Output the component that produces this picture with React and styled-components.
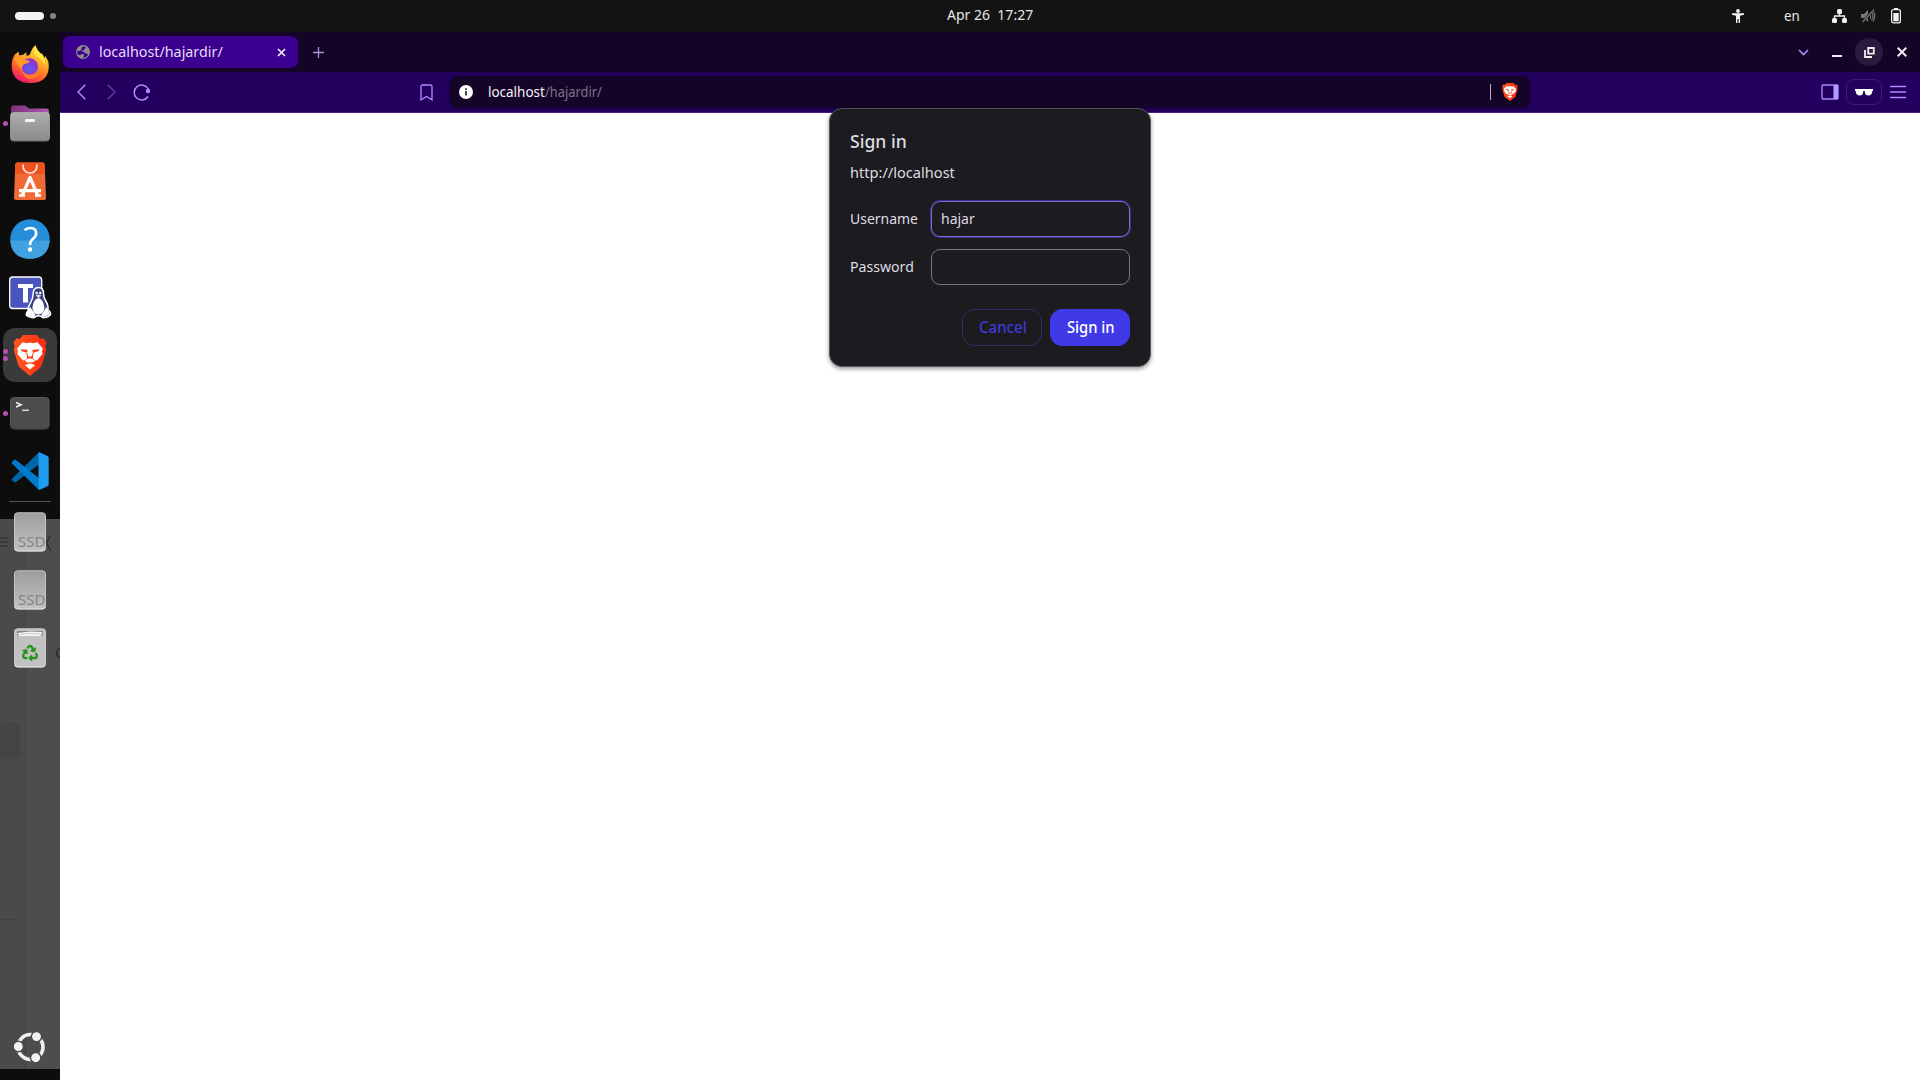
import React, { useLayoutEffect, useRef, useState } from "react";
import styled, { createGlobalStyle } from "styled-components";
import { FaRecycle } from "react-icons/fa";

const Global = createGlobalStyle`
  * { box-sizing: border-box; }
  body { margin: 0; background: #fff; overflow: hidden; font-family: "Noto Sans", "Open Sans", sans-serif; }
  button, input { font: inherit; margin: 0; padding: 0; }
  svg { display: block; flex: none; }
`;

const Desktop = styled.div`
  width: 1920px; height: 1080px; display: flex; flex-direction: column; background: #fff;
`;

/* text scaled to a fixed advance width */
const FitBox = styled.span`
  display: block; flex: none; width: ${p => p.$w}px; white-space: pre;
  font-size: ${p => p.$size || 15}px; font-weight: ${p => p.$weight || 400};
  color: ${p => p.$color || "#dedde2"}; line-height: 20px;
`;
const FitInner = styled.span`display: inline-block; transform-origin: 0 50%;`;
function Fit({ w, size, weight, color, children }) {
  const ref = useRef(null);
  const [scale, setScale] = useState(1);
  useLayoutEffect(() => { setScale(w / ref.current.offsetWidth); }, [w]);
  return (
    <FitBox $w={w} $size={size} $weight={weight} $color={color}>
      <FitInner ref={ref} style={{ transform: `scaleX(${scale})` }}>{children}</FitInner>
    </FitBox>
  );
}

/* ---------- top panel ---------- */
const Panel = styled.header`
  height: 32px; flex: none; background: #131313; display: grid;
  grid-template-columns: 946px 88px 1fr; align-items: center;
`;
const Workspaces = styled.div`display: flex; align-items: center; gap: 6px; padding-left: 15px;`;
const Pill = styled.i`width: 29px; height: 8px; border-radius: 4px; background: #f2f2f2;`;
const Dot = styled.i`width: 6px; height: 6px; border-radius: 50%; background: #868686;`;
const Clock = styled.div`padding: 0 0 4px 1px;`;
const Tray = styled.div`
  display: flex; align-items: center; justify-content: flex-end; padding-right: 18px;
`;
const TrayItem = styled.div`margin-left: ${p => p.$gap}px; padding-bottom: ${p => p.$lift || 0}px;`;

/* ---------- dock ---------- */
const Body = styled.div`flex: 1; display: flex; min-height: 0;`;
const Dock = styled.nav`
  position: relative; z-index: 0; width: 60px; flex: none; background: #0d0d0d; overflow: hidden;
  display: flex; flex-direction: column; padding: 4px 0 4px;
`;
const Ghost = styled.div`
  position: absolute; z-index: -1; left: 0; top: 487px; width: 60px; height: 550px;
  background: #4d4d4d; display: flex;
`;
const GhostSide = styled.div`
  width: 26px; background: #4a4a4a; border-right: 1px solid #424242; padding-top: 18px;
`;
const GhostRow = styled.div`margin-top: 176px; width: 20px; height: 36px; background: #444; border-radius: 0 5px 5px 0;`;
const GhostLine = styled.div`margin-top: 160px; width: 20px; height: 1px; background: #404040;`;
const GhostMain = styled.div`width: 34px; padding-top: 15px;`;
const GhostText = styled.div`margin: 90px 0 0 29px; font-size: 15px; line-height: 20px; color: #292929;`;
const Slot = styled.div`
  position: relative; height: 58px; flex: none; display: flex; align-items: center; justify-content: center;
`;
const ActiveTile = styled.div`
  width: 54px; height: 54px; border-radius: 12px; background: #3a3a3a;
  display: flex; align-items: center; justify-content: center;
`;
const Running = styled.div`
  position: absolute; left: 3px; top: 0; height: 58px; display: flex; flex-direction: column;
  justify-content: center; gap: 2.5px;
`;
const RunDot = styled.i`width: 5px; height: 5px; border-radius: 50%; background: #b54fb5;`;
const DockRule = styled.div`height: 3px; flex: none; padding: 1px 9px;`;
const DockRuleLine = styled.div`height: 1px; background: #555;`;
const DockSpacer = styled.div`flex: 1;`;
const Launcher = styled.button`
  height: 58px; border: 0; background: none; display: flex; align-items: center; justify-content: center;
`;

/* ---------- browser ---------- */
const Browser = styled.main`flex: 1; display: flex; flex-direction: column; background: #fff;`;
const TabStrip = styled.div`
  height: 40px; flex: none; background: #140428; display: flex; align-items: center; padding: 0 11px 0 3px;
`;
const Tab = styled.div`
  width: 235px; height: 32px; border-radius: 7px; background: #3b008f;
  display: flex; align-items: center; padding: 0 12px 0 13px;
`;
const TabText = styled.div`flex: 1; padding: 0 0 2px 9px;`;
const PlainButton = styled.button`
  border: 0; background: ${p => p.$bg || "none"}; border-radius: ${p => p.$round ? "50%" : 0};
  width: ${p => p.$w}px; height: 28px; display: flex; align-items: center; justify-content: center;
  margin-left: ${p => p.$gap || 0}px; flex: none;
`;
const Grow = styled.div`flex: 1;`;
const Toolbar = styled.div`
  height: 41px; flex: none; background: #23005e; border-bottom: 1px solid #482480;
  display: flex; align-items: center; padding: 0 13px 0 9px;
`;
const Address = styled.div`
  width: 1080px; height: 32px; margin-left: 10px; border-radius: 8px; background: #140428;
  box-shadow: 0 1px 4px rgba(0,0,0,.25);
  display: flex; align-items: center; padding: 0 12px 0 9px;
`;
const UrlParts = styled.div`display: flex; flex: 1; padding: 0 0 3px 15px;`;
const Bar = styled.i`width: 1px; height: 16px; background: #b5b2bc; margin-right: 11px;`;
const PrivatePill = styled.button`
  width: 36px; height: 26px; border: 1px solid #3f1d78; border-radius: 8px; background: none;
  display: flex; align-items: center; justify-content: center; margin: 0 7px 0 7px;
`;

/* ---------- sign-in dialog ---------- */
const Dialog = styled.form`
  position: absolute; left: 829px; top: 108px; width: 322px; height: 259px;
  border: 1px solid #55545a; border-radius: 13px; background: #1c1b1f;
  box-shadow: 0 2px 4px rgba(0,0,0,.4); padding: 22px 20px 20px;
  display: flex; flex-direction: column;
`;
const Origin = styled.div`margin-top: 11px;`;
const Fields = styled.div`
  display: grid; grid-template-columns: 68px 199px; column-gap: 13px; row-gap: 12px;
  align-items: center; margin-top: 19px;
`;
const Caption = styled.label`padding-bottom: 2px;`;
const Field = styled.div`
  height: 36px; border-radius: 9px; padding: 6px 9px; display: flex;
  border: 1px solid ${p => p.$focus ? "#7a6fd0" : "#78767c"};
  box-shadow: ${p => p.$focus ? "0 0 0 1px #36308f" : "none"};
`;
const Actions = styled.div`display: flex; justify-content: flex-end; gap: 8px; margin-top: 24px;`;
const Action = styled.button`
  width: 80px; height: 37px; border-radius: 12px; display: flex; align-items: center; justify-content: center;
  background: ${p => p.$primary ? "#3f39e8" : "transparent"}; padding: 0 0 2px 1px;
  border: 1px solid ${p => p.$primary ? "#3f39e8" : "#2d2f66"};
`;

/* ---------- icons ---------- */
function Lion({ w, h }) {
  return (
    <svg width={w} height={h} viewBox="0 0 34 41" preserveAspectRatio="none">
      <defs>
        <linearGradient id="brave" x1="0" x2="1"><stop offset="0" stopColor="#ff5a1f" /><stop offset="1" stopColor="#fb2a10" /></linearGradient>
      </defs>
      <path d="M10 0h14l3.300 4 3.200-.8 3 4.300-1.200 3.500 1 3.500-4.500 15.500q-.8 2.200-2.700 3.600L17 41l-9.100-7.400Q6 32.200 5.200 30L.7 14.500l1-3.500L.5 7.500l3-4.300 3.200.8z" fill="url(#brave)" />
      <path d="M9.500 7.300l4.500.9 3-.7 3 .7 4.500-.9L30 13.800l-1 2.200.5 3-5.500 6.500-1.500-.3-2.700-1.700L20.500 18l-.5-3h-6l-.5 3 .7 5.500-2.700 1.700-1.500.3L4.500 19l.5-3-1-2.200z" fill="#fff" />
      <path d="M14.200 9h5.600l.2 8-1 3.800L17 22l-2-1.200-1-3.800z" fill="#fff" />
      <path d="M17 23.300l3.200 1 2 1.500L17 29l-5.200-3.200 2-1.500zM17 27.500l5 2.700-5 4.300-5-4.300z" fill="#fff" />
      <path d="M7.500 14.200l6.300.6 1.200 1-1.500 2-5-1.700zM26.500 14.200l-6.300.6-1.200 1 1.500 2 5-1.700z" fill="#fb4319" />
      <path d="M12.300 28.300l4.700-1.100 4.700 1.100-.4 1L17 28.500l-4.300.8z" fill="#fb4319" />
    </svg>
  );
}

const FirefoxIcon = () => (
  <svg width="60" height="58" viewBox="0 0 60 58">
    <defs>
      <linearGradient id="ff" x1=".8" y1="0" x2=".3" y2="1">
        <stop offset="0" stopColor="#fff04a" /><stop offset=".35" stopColor="#ffb52b" />
        <stop offset=".68" stopColor="#ff6a2c" /><stop offset="1" stopColor="#f0126c" />
      </linearGradient>
      <radialGradient id="ffg" cx=".45" cy=".65" r=".65">
        <stop offset="0" stopColor="#5a62ee" /><stop offset=".6" stopColor="#7b40d8" /><stop offset="1" stopColor="#a22ad0" />
      </radialGradient>
    </defs>
    <path d="M14.700 18.500q1.600-1.200 4-3.100-.1 3 .8 4.100 2-.9 4-.8 1-1.600 3-2.200-.5 2 .3 3.300 3.500-.6 3.800-3.600 1.800-4.700 5-7.200.7 4.400 5 8.200 1.300-.2 1.900 1.100 1.200 1.400 1.800 3.600.8-1 .6-2.200 3.900 4.500 3.900 10.100 0 17.200-18.600 17.200-18.600 0-18.600-18.600 0-5 3.100-9.900z" fill="url(#ff)" />
    <circle cx="29.800" cy="30.500" r="8.300" fill="url(#ffg)" />
    <path d="M14.500 22.500q5-4 10.500 1.500l4.500.7q-.5 2.500-4.600 3-4 2.300-2.900 6.300-5-5.600-7.500-11.500z" fill="#ff9a27" />
    <path d="M35.600 9.500q.7 4.400 5 8.200 5.300 5 4.200 12-2.600-7-8.300-9.500-4.500-3.400-.9-10.700z" fill="#ffe644" />
    <path d="M22 33q2 6 8.500 5.800 7-.3 8.300-7.300 2 10.500-9 11.500-6 0-7.800-10z" fill="#ff7a2a" />
  </svg>
);
const FilesIcon = () => (
  <svg width="60" height="58" viewBox="0 0 60 58">
    <defs><linearGradient id="fg" y2="1" x2="0"><stop stopColor="#adadad" /><stop offset="1" stopColor="#8b8b8b" /></linearGradient>
      <linearGradient id="fp"><stop stopColor="#7c3279" /><stop offset="1" stopColor="#b157b0" /></linearGradient></defs>
    <path d="M11 32V14q0-2.500 2.500-2.500H25l4 3h17q3 0 3 3V32z" fill="url(#fp)" />
    <rect x="10.500" y="18.500" width="39" height="28" rx="3" fill="url(#fg)" stroke="#c0c0c0" strokeWidth=".6" />
    <path d="M10.500 44q0 3 3 3h33q3 0 3-3" fill="none" stroke="#6f6f6f" />
    <rect x="25" y="25" width="10" height="3" rx="1" fill="#f5f5f5" />
  </svg>
);
const StoreIcon = () => (
  <svg width="60" height="58" viewBox="0 0 60 58">
    <path d="M17.500 10.500h25q2 0 2.200 2L46 46q0 2-2 2H16q-2 0-2-2l1.300-33.500q.2-2 2.200-2z" fill="#f06a35" />
    <path d="M17.500 10.500h25q2 0 2.200 2L45 22H15l.3-9.500q.2-2 2.200-2z" fill="#ed541d" />
    <path d="M23 12.500q0 8.500 7 8.500t7-8.500" fill="none" stroke="#ffe9df" strokeWidth="1.600" />
    <path d="M22 44l8-18.500L38 44M19 38.700h22" fill="none" stroke="#fff" strokeWidth="3.200" strokeLinejoin="round" />
    <path d="M19 43.500h6M35 43.500h6" stroke="#fff" strokeWidth="2.500" />
  </svg>
);
const HelpIcon = () => (
  <svg width="60" height="58" viewBox="0 0 60 58">
    <circle cx="30" cy="29" r="19.700" fill="#258dd9" />
    <path d="M10.300 30.500h39.400Q48.500 48.700 30 48.700T10.300 30.500z" fill="#41a0e0" />
    <path d="M24.500 20q3-2 6-2 5.700 0 5.700 5.200 0 3-3.200 5.600-3 2.400-3 6.200" fill="none" stroke="#fff" strokeWidth="2.700" />
    <circle cx="30" cy="39.500" r="2.200" fill="#fff" />
  </svg>
);
const TeamsIcon = () => (
  <svg width="60" height="58" viewBox="0 0 60 58">
    <rect x="9.700" y="9" width="32" height="31.500" rx="3" fill="#4b53bc" stroke="#fff" strokeWidth="1.300" />
    <path d="M18 16h15v4h-5v14.500h-5V20h-5z" fill="#fff" />
    <path d="M38.500 19.500q5 0 5 6 0 4 2.300 7.500 3 5 2 8.500 3.200 2.500 2.700 5-2 3-7.500 3.300-2-2-4.500-2t-4.500 2q-5.500-.3-7.800-2.800 0-3 2-4-.8-3.500 2.600-8.700 2.300-4 2.300-8 0-6.800 5.400-6.800z" fill="#3a4282" stroke="#fff" strokeWidth="1.500" />
    <path d="M38.400 30q5 1 6 10-1 6-6 6.500-5-.5-6-6.500 1-9 6-10z" fill="#fff" />
    <path d="M30 39l5.500 7.500-1.500 3-7.500-2 .5-4zM46.500 39l-5 7.500 1.200 3 7-3-1.500-4z" fill="#fff" />
    <circle cx="36.700" cy="25" r="1.200" fill="#fff" /><circle cx="40.200" cy="25" r="1.200" fill="#fff" />
    <path d="M35.500 27.500l3-1 3 1-3 2.500z" fill="#d8dcf5" />
  </svg>
);
const TerminalIcon = () => (
  <svg width="60" height="58" viewBox="0 0 60 58">
    <rect x="10.500" y="13.500" width="38.500" height="31.500" rx="3.500" fill="#4c4c4c" stroke="#5b5b5b" />
    <path d="M10.700 42q0 3 3.500 3h32q2.800 0 2.800-3" stroke="#343434" fill="none" />
    <path d="M16 18.500l5 2.200-5 2.200" fill="none" stroke="#f0f0f0" strokeWidth="1.600" />
    <path d="M22 26.300h7" stroke="#d8d8d8" strokeWidth="1.500" />
  </svg>
);
const CodeIcon = () => (
  <svg width="60" height="58" viewBox="0 0 60 58">
    <path d="M12 36.700q-.8.800 0 1.600l2 1.800q1 .7 2 0L39.500 22V10.700q-.9 0-1.900.9z" fill="#0065a9" />
    <path d="M12 21.500q-.8-.8 0-1.600l2-1.800q1-.7 2 0l23.500 18.300v11.200q-.9 0-1.900-.9z" fill="#007acc" />
    <path d="M38.500 47.500V10.700q.6-.6 1.500-.2l7.400 3.500q1.300.6 1.300 2v26.200q0 1.400-1.300 2L40 47.700q-.9.400-1.500-.2z" fill="#1f9cf0" />
  </svg>
);
const DiskIcon = () => (
  <svg width="60" height="58" viewBox="0 0 60 58">
    <defs><linearGradient id="dk" y2="1" x2="0"><stop stopColor="#9c9c9c" /><stop offset="1" stopColor="#c2c2c2" /></linearGradient></defs>
    <rect x="14.500" y="9.800" width="31" height="38" rx="3" fill="url(#dk)" stroke="#c4c4c4" />
    <path d="M15 46q0 2 3 2h24q3 0 3-2" fill="none" stroke="#ededed" />
    <text x="18" y="43.500" fontSize="13.500" fill="#858585" textLength="27.500" lengthAdjust="spacingAndGlyphs" fontFamily="Noto Sans">SSD</text>
  </svg>
);
const TrashIcon = () => (
  <svg width="60" height="58" viewBox="0 0 60 58">
    <rect x="14.500" y="9.800" width="31" height="38" rx="3" fill="#c1c1c1" stroke="#cacaca" />
    <path d="M15 46q0 2 3 2h24q3 0 3-2" fill="none" stroke="#eee" />
    <path d="M17 12h26l-.5 5h-25z" fill="#888" />
    <path d="M18 14l12-1.500 12 .5-1 4H19z" fill="#f6f6f6" />
    <path d="M20 15.500l9-1 12 .5" stroke="#b5b5b5" fill="none" strokeWidth=".7" />
    <FaRecycle x="22" y="26" size="16" color="#25921f" stroke="#25921f" strokeWidth="14" />
  </svg>
);
const UbuntuIcon = () => (
  <svg width="34" height="34" viewBox="0 0 34 34">
    <circle cx="17.500" cy="17" r="12.500" fill="none" stroke="#f2f2f2" strokeWidth="3.600" />
    <g fill="#f2f2f2" stroke="#4c4c4c" strokeWidth="1.500">
      <circle cx="5.300" cy="16.500" r="5.200" /><circle cx="23.500" cy="6.600" r="5.200" /><circle cx="22.700" cy="27.700" r="5.200" />
    </g>
  </svg>
);

const apps = [
  { id: "firefox", icon: <FirefoxIcon />, dots: 0 },
  { id: "files", icon: <FilesIcon />, dots: 1 },
  { id: "store", icon: <StoreIcon />, dots: 0 },
  { id: "help", icon: <HelpIcon />, dots: 0 },
  { id: "teams", icon: <TeamsIcon />, dots: 0 },
  { id: "brave", icon: <ActiveTile><Lion w={34} h={41} /></ActiveTile>, dots: 2 },
  { id: "terminal", icon: <TerminalIcon />, dots: 1 },
  { id: "code", icon: <CodeIcon />, dots: 0 },
];

function TopPanel() {
  return (
    <Panel>
      <Workspaces><Pill /><Dot /></Workspaces>
      <Clock><Fit w={86} color="#e6e6e6">{"Apr 26  17:27"}</Fit></Clock>
      <Tray>
        <svg width="12" height="14" viewBox="0 0 12 14" fill="#f2f2f2"><circle cx="6" cy="2" r="1.900" /><path d="M0 4.200h12v1.500L8 6.700V14H6.600v-4H5.400v4H4V6.700L0 5.700z" /></svg>
        <TrayItem $gap={40} $lift={2}><Fit w={16} color="#e6e6e6">en</Fit></TrayItem>
        <TrayItem $gap={32}>
          <svg width="15" height="14" viewBox="0 0 15 14"><g fill="#f2f2f2"><rect x="5" width="5" height="5" rx="1.500" /><rect y="9" width="5" height="5" rx="1.500" /><rect x="10" y="9" width="5" height="5" rx="1.500" /></g><path d="M7.500 4v3M2.500 9.500V7h10v2.500" fill="none" stroke="#f2f2f2" strokeWidth="1.300" /></svg>
        </TrayItem>
        <TrayItem $gap={14}>
          <svg width="15" height="14" viewBox="0 0 15 14"><path d="M0 5h3l4-4v12L3 9H0z" fill="#777" /><path d="M9 5q1.300 2 0 4.500M10.500 3.200q3 3.500 0 8M12 1.500q3.500 5 0 11" fill="none" stroke="#777" strokeWidth="1.200" /><path d="M1 13.500L13 .5" stroke="#131313" strokeWidth="2.500" /><path d="M1.500 13L13 .8" stroke="#777" strokeWidth="1.300" /></svg>
        </TrayItem>
        <TrayItem $gap={14}>
          <svg width="12" height="16" viewBox="0 0 12 16"><path d="M4 0h4v2H4z" fill="#f2f2f2" /><rect x="1.600" y="1.600" width="8.800" height="13.300" rx="2" fill="none" stroke="#f2f2f2" strokeWidth="1.200" /><rect x="3.300" y="5" width="5.400" height="8.300" fill="#f2f2f2" /></svg>
        </TrayItem>
      </Tray>
    </Panel>
  );
}

function AppDock() {
  return (
    <Dock>
      <Ghost>
        <GhostSide>
          <svg width="8" height="10" viewBox="0 0 8 10"><path d="M0 1h8M0 5h8M0 9h8" stroke="#2b2b2b" /></svg>
          <GhostRow /><GhostLine />
        </GhostSide>
        <GhostMain>
          <svg width="34" height="18" viewBox="0 0 34 18"><path d="M24.500 1.500L20.500 9l4 7.500" fill="none" stroke="#2b2b2b" strokeWidth="1.200" /></svg>
          <GhostText>O</GhostText>
        </GhostMain>
      </Ghost>
      {apps.map(a => (
        <Slot key={a.id}>
          {a.icon}
          {a.dots > 0 && <Running>{Array.from({ length: a.dots }, (_, i) => <RunDot key={i} />)}</Running>}
        </Slot>
      ))}
      <DockRule><DockRuleLine /></DockRule>
      <Slot><DiskIcon /></Slot>
      <Slot><DiskIcon /></Slot>
      <Slot><TrashIcon /></Slot>
      <DockSpacer />
      <Launcher><UbuntuIcon /></Launcher>
    </Dock>
  );
}

function Tabs() {
  return (
    <TabStrip>
      <Tab>
        <svg width="14" height="14" viewBox="0 0 14 14"><circle cx="7" cy="7" r="7" fill="#8b8b8b" /><path d="M8 1.300l-2.600 1.500.3 1.800-2 1.300H1.300q-.6 2 .8 4l2.500.2 1.300-1.400 2 .6.300 1.700-1.500 1.800q3.500.3 5.300-2.700l-1-1.500-1.800-.2-1.500-2H5.600l.2-1.200 2.600-.2.200-1.500 1.500-.7z" fill="#3b008f" /></svg>
        <TabText><Fit w={124} color="#e6dcfa">localhost/hajardir/</Fit></TabText>
        <svg width="9" height="9" viewBox="0 0 9 9"><path d="M1 1l7 7M8 1L1 8" stroke="#f0eaff" strokeWidth="1.700" /></svg>
      </Tab>
      <PlainButton $w={28} $gap={6}><svg width="11" height="11" viewBox="0 0 11 11"><path d="M5.500 0v11M0 5.500h11" stroke="#a890dc" strokeWidth="1.300" /></svg></PlainButton>
      <Grow />
      <PlainButton $w={24}><svg width="11" height="7" viewBox="0 0 11 7"><path d="M1 1l4.500 4.500L10 1" fill="none" stroke="#a98cff" strokeWidth="1.600" /></svg></PlainButton>
      <PlainButton $w={24} $gap={10}><svg width="10" height="10" viewBox="0 0 10 10"><path d="M0 9h10" stroke="#eee" strokeWidth="2" /></svg></PlainButton>
      <PlainButton $w={28} $gap={6} $bg="#2a1b3e" $round><svg width="11" height="11" viewBox="0 0 11 11"><path d="M4.200 1h5.600v5.600H4.200zM1 3v7h7" fill="none" stroke="#eee" strokeWidth="1.800" /></svg></PlainButton>
      <PlainButton $w={14} $gap={12}><svg width="10" height="10" viewBox="0 0 10 10"><path d="M.7.7l8.600 8.600M9.300.7L.7 9.300" stroke="#eee" strokeWidth="2" /></svg></PlainButton>
    </TabStrip>
  );
}

function NavBar() {
  return (
    <Toolbar>
      <PlainButton $w={24}><svg width="9" height="16" viewBox="0 0 9 16"><path d="M8.300.7L1 8l7.300 7.300" fill="none" stroke="#a98cff" strokeWidth="1.500" /></svg></PlainButton>
      <PlainButton $w={24} $gap={6}><svg width="9" height="16" viewBox="0 0 9 16"><path d="M.7.7L8 8 .7 15.300" fill="none" stroke="#603a9e" strokeWidth="1.500" /></svg></PlainButton>
      <PlainButton $w={24} $gap={7}><svg width="18" height="17" viewBox="0 0 18 17"><path d="M15 12.500A7.500 7.500 0 1 1 15.300 5" fill="none" stroke="#a98cff" strokeWidth="1.500" /><circle cx="15" cy="7" r="2.200" fill="#a98cff" /></svg></PlainButton>
      <PlainButton $w={28} $gap={258}><svg width="13" height="17" viewBox="0 0 13 17"><path d="M1 2.500Q1 1 2.500 1h8Q12 1 12 2.500v13.300L6.500 12.500 1 15.800z" fill="none" stroke="#a98cff" strokeWidth="1.300" /></svg></PlainButton>
      <Address>
        <svg width="14" height="14" viewBox="0 0 14 14"><circle cx="7" cy="7" r="7" fill="#fff" /><path d="M7 6v4.500M7 3.300V5" stroke="#140428" strokeWidth="1.500" /></svg>
        <UrlParts><Fit w={56.500} color="#f4f2f8">localhost</Fit><Fit w={56.500} color="#7c7488">/hajardir/</Fit></UrlParts>
        <Bar /><Lion w={16} h={18} />
      </Address>
      <Grow />
      <svg width="18" height="16" viewBox="0 0 18 16"><rect x="1" y="1" width="16" height="14" rx="1" fill="none" stroke="#a98cff" strokeWidth="1.300" /><path d="M12.500 1H17v14h-4.500z" fill="#b49cff" /></svg>
      <PrivatePill><svg width="18" height="7" viewBox="0 0 18 7"><path d="M0 0h18v1.500l-.7.700q-.5 4.300-4 4.300T9.700 2h-1.400q-.1 4.500-3.600 4.500t-4-4.300L0 1.500z" fill="#fff" /></svg></PrivatePill>
      <svg width="18" height="14" viewBox="0 0 18 14"><path d="M1 1.500h16M1 7h16M1 12.500h16" stroke="#a98cff" strokeWidth="1.300" /></svg>
    </Toolbar>
  );
}

function SignIn() {
  return (
    <Dialog>
      <Fit w={57} size={18.500} weight={500}>Sign in</Fit>
      <Origin><Fit w={105}>http://localhost</Fit></Origin>
      <Fields>
        <Caption><Fit w={68}>Username</Fit></Caption><Field $focus><Fit w={33.500}>hajar</Fit></Field>
        <Caption><Fit w={64}>Password</Fit></Caption><Field />
      </Fields>
      <Actions>
        <Action type="button"><Fit w={48} size={16} weight={500} color="#3f39d8">Cancel</Fit></Action>
        <Action type="button" $primary><Fit w={48} size={16} weight={500} color="#fff">Sign in</Fit></Action>
      </Actions>
    </Dialog>
  );
}

export default function App() {
  return (
    <Desktop>
      <Global />
      <TopPanel />
      <Body>
        <AppDock />
        <Browser><Tabs /><NavBar /></Browser>
      </Body>
      <SignIn />
    </Desktop>
  );
}
